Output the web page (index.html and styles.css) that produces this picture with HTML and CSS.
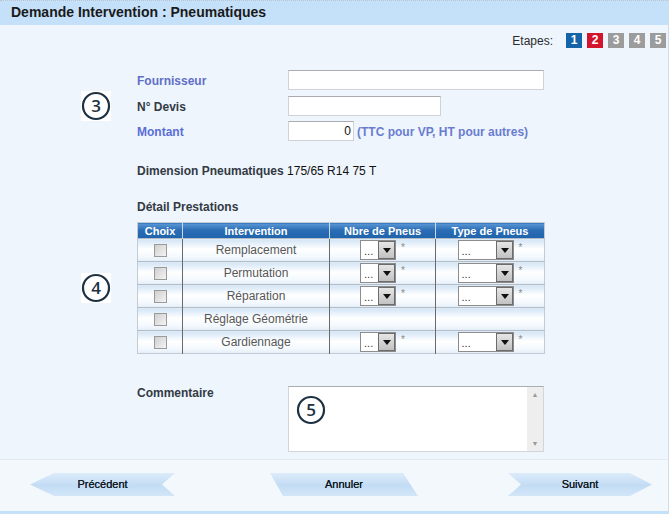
FILE: index.html
```html
<!DOCTYPE html>
<html lang="fr">
<head>
<meta charset="utf-8">
<title>Demande Intervention : Pneumatiques</title>
<link rel="stylesheet" href="styles.css">
</head>
<body>
<div class="page">
  <div class="header">Demande Intervention : Pneumatiques</div>

  <div class="steps">
    <span class="steps-label">Etapes:</span>
    <span class="step step-blue">1</span>
    <span class="step step-red">2</span>
    <span class="step step-gray">3</span>
    <span class="step step-gray">4</span>
    <span class="step step-gray">5</span>
  </div>

  <div class="section sec-fields">
    <div class="marker">
      <svg class="circle-num" width="30" height="30" viewBox="0 0 30 30"><rect width="30" height="30" fill="#fff"/><circle cx="15" cy="15" r="13" fill="none" stroke="#1d3142" stroke-width="2.2"/><text x="15" y="21" text-anchor="middle">3</text></svg>
    </div>
    <div class="fields">
      <label class="lbl lbl-blue">Fournisseur</label>
      <div class="input w-long"></div>
      <label class="lbl">N° Devis</label>
      <div class="input w-mid"></div>
      <label class="lbl lbl-blue2">Montant</label>
      <div class="montant"><div class="input w-short num">0</div><span class="hint">(TTC pour VP, HT pour autres)</span></div>
    </div>
  </div>

  <div class="dimension"><span class="lbl">Dimension Pneumatiques</span> 175/65 R14 75 T</div>

  <div class="section sec-detail">
    <div class="marker marker-4">
      <svg class="circle-num" width="30" height="30" viewBox="0 0 30 30"><rect width="30" height="30" fill="#fff"/><circle cx="15" cy="15" r="13" fill="none" stroke="#1d3142" stroke-width="2.2"/><text x="15" y="21" text-anchor="middle">4</text></svg>
    </div>
    <div class="detail">
      <div class="lbl subtitle">Détail Prestations</div>
      <table class="presta">
        <colgroup><col class="c1"><col class="c2"><col class="c3"><col class="c4"></colgroup>
        <thead>
          <tr><th>Choix</th><th>Intervention</th><th>Nbre de Pneus</th><th>Type de Pneus</th></tr>
        </thead>
        <tbody>
          <tr><td><span class="chk"></span></td><td>Remplacement</td>
            <td><span class="sel sel-s"><span class="sel-val">...</span><span class="sel-btn"></span></span><span class="star">*</span></td>
            <td><span class="sel sel-l"><span class="sel-val">...</span><span class="sel-btn"></span></span><span class="star">*</span></td></tr>
          <tr><td><span class="chk"></span></td><td>Permutation</td>
            <td><span class="sel sel-s"><span class="sel-val">...</span><span class="sel-btn"></span></span><span class="star">*</span></td>
            <td><span class="sel sel-l"><span class="sel-val">...</span><span class="sel-btn"></span></span><span class="star">*</span></td></tr>
          <tr><td><span class="chk"></span></td><td>Réparation</td>
            <td><span class="sel sel-s"><span class="sel-val">...</span><span class="sel-btn"></span></span><span class="star">*</span></td>
            <td><span class="sel sel-l"><span class="sel-val">...</span><span class="sel-btn"></span></span><span class="star">*</span></td></tr>
          <tr><td><span class="chk"></span></td><td>Réglage Géométrie</td><td></td><td></td></tr>
          <tr><td><span class="chk"></span></td><td>Gardiennage</td>
            <td><span class="sel sel-s"><span class="sel-val">...</span><span class="sel-btn"></span></span><span class="star">*</span></td>
            <td><span class="sel sel-l"><span class="sel-val">...</span><span class="sel-btn"></span></span><span class="star">*</span></td></tr>
        </tbody>
      </table>
    </div>
  </div>

  <div class="comment-row">
    <label class="lbl comment-lbl">Commentaire</label>
    <div class="textarea">
      <svg class="circle-num circle-5" width="30" height="30" viewBox="0 0 30 30"><rect width="30" height="30" fill="#fff"/><circle cx="15" cy="15" r="13" fill="none" stroke="#1d3142" stroke-width="2.2"/><text x="15" y="21" text-anchor="middle">5</text></svg>
      <div class="scrollbar"><span class="arr">&#9650;</span><span class="arr">&#9660;</span></div>
    </div>
  </div>

  <div class="footer">
    <div class="buttons">
      <div class="btn btn-prev">Précédent</div>
      <div class="btn btn-cancel">Annuler</div>
      <div class="btn btn-next">Suivant</div>
    </div>
    <div class="footer-strip"></div>
  </div>
</div>
</body>
</html>
```

FILE: styles.css
```css
html, body {
  margin: 0;
  padding: 0;
}
body {
  width: 669px;
  height: 514px;
  overflow: hidden;
  background: #eef5fd;
  font-family: "Liberation Sans", Arial, sans-serif;
  color: #333a44;
}
.page {
  display: flex;
  flex-direction: column;
  height: 514px;
  box-sizing: border-box;
  border-right: 1px solid #d2dbe4;
}
.header {
  height: 25px;
  box-sizing: border-box;
  border-top: 1px dotted #b9c4cf;
  background: #c5e0f9;
  padding-left: 11px;
  font-weight: bold;
  font-size: 14px;
  line-height: 23px;
  color: #1a1a1a;
}
.steps {
  display: flex;
  justify-content: flex-end;
  align-items: center;
  gap: 5px;
  margin-top: 8px;
  padding-right: 2px;
  height: 15px;
}
.steps-label {
  font-size: 12px;
  color: #2b2b2b;
  margin-right: 8px;
}
.step {
  width: 16px;
  height: 15px;
  color: #fff;
  font-size: 12px;
  font-weight: bold;
  text-align: center;
  line-height: 15px;
}
.step-blue { background: #1564a8; }
.step-red { background: #d3142d; }
.step-gray { background: #9c9c9c; }

.section {
  display: flex;
}
.marker {
  width: 137px;
  box-sizing: border-box;
  padding-left: 81px;
  display: flex;
  align-items: center;
}
.circle-num text {
  font-family: "Open Sans", "DejaVu Sans", sans-serif;
  font-size: 17px;
  font-weight: 600;
  fill: #1d3142;
}
.sec-fields {
  margin-top: 22px;
}
.fields {
  display: grid;
  grid-template-columns: 151px auto;
  grid-template-rows: 20px 20px 20px;
  row-gap: 5.5px;
  align-items: center;
}
.fields .lbl {
  padding-top: 2px;
}
.lbl {
  font-size: 12px;
  font-weight: bold;
  color: #333a44;
}
.lbl-blue { color: #5f6fc5; }
.lbl-blue2 { color: #5a6ed6; }
.input {
  height: 20px;
  box-sizing: border-box;
  background: #fff;
  border: 1px solid #cfd3d7;
  border-top-color: #a9adb1;
}
.w-long { width: 256px; }
.w-mid { width: 153px; }
.w-short { width: 66px; }
.num {
  font-size: 12px;
  text-align: right;
  padding-right: 2px;
  line-height: 18px;
  color: #111;
}
.montant {
  display: flex;
  align-items: center;
  gap: 3px;
}
.hint {
  font-size: 12px;
  font-weight: bold;
  color: #6a7cd0;
  padding-top: 2px;
}
.dimension {
  margin-top: 23px;
  padding-left: 137px;
  font-size: 12px;
  line-height: 14px;
  color: #111;
}
.dimension .lbl { color: #333a44; }

.sec-detail {
  margin-top: 22px;
}
.marker-4 {
  align-items: flex-start;
  padding-top: 73px;
}
.subtitle {
  line-height: 14px;
  margin-bottom: 8px;
}
.presta {
  border-collapse: collapse;
  width: 407px;
  font-size: 12px;
  table-layout: fixed;
  border: 1px solid #c3ccd5;
}
.c1 { width: 45px; }
.c2 { width: 147px; }
.c3 { width: 106px; }
.c4 { width: 109px; }
.presta th {
  height: 15px;
  padding: 0;
  background: linear-gradient(#5b97d5, #2a6db5 45%, #1f63ac);
  color: #fff;
  font-size: 11px;
  font-weight: bold;
  line-height: 14px;
  border-left: 1px solid #c7d8ea;
}
.presta th:first-child { border-left: none; }
.presta td {
  height: 22px;
  padding: 0;
  text-align: center;
  color: #575757;
  background: linear-gradient(#d3e5f6, #ffffff 45%, #f3f8fd 80%, #e2edf8);
  border-top: 1px solid #b4bdc6;
  border-left: 1px solid #6a6a6a;
  white-space: nowrap;
  vertical-align: middle;
}
.presta td:first-child { border-left: none; }
.chk {
  display: inline-block;
  width: 11px;
  height: 11px;
  border: 1px solid #9a9a9a;
  background: linear-gradient(135deg, #cfcfcf, #f4f4f4);
  vertical-align: middle;
}
.sel {
  display: inline-flex;
  height: 20px;
  box-sizing: border-box;
  border: 1px solid #8d8d8d;
  background: #fff;
  vertical-align: middle;
}
.sel-s { width: 36px; }
.sel-l { width: 56px; }
.sel-val {
  flex: 1;
  text-align: left;
  padding-left: 3px;
  font-size: 11px;
  line-height: 21px;
  color: #333;
}
.sel-btn {
  width: 17px;
  border: 1px solid #6c6c6c;
  box-sizing: border-box;
  background: linear-gradient(#e6e6e6, #c2c2c2);
  position: relative;
}
.sel-btn::after {
  content: "";
  position: absolute;
  left: 4px;
  top: 6px;
  border-left: 4px solid transparent;
  border-right: 4px solid transparent;
  border-top: 5px solid #111;
}
.star {
  display: inline-block;
  vertical-align: top;
  margin-left: 5px;
  font-size: 10px;
  color: #8a8a8a;
  line-height: 16px;
}

.comment-row {
  display: flex;
  margin-top: 32px;
  padding-left: 137px;
}
.comment-lbl {
  width: 151px;
  line-height: 14px;
}
.textarea {
  position: relative;
  width: 256px;
  height: 66px;
  box-sizing: border-box;
  background: #fff;
  border: 1px solid #d2d6da;
  border-top-color: #a9adb1;
  display: flex;
  justify-content: flex-end;
}
.circle-5 {
  position: absolute;
  left: 7px;
  top: 8px;
}
.scrollbar {
  width: 16px;
  background: #eeeeee;
  display: flex;
  flex-direction: column;
  justify-content: space-between;
  align-items: center;
  padding: 4px 0 3px;
  box-sizing: border-box;
}
.arr {
  font-size: 7px;
  color: #9a9a9a;
  line-height: 8px;
}

.footer {
  margin-top: 7px;
  flex: 1;
  display: flex;
  flex-direction: column;
  background: #f3f8fd;
  border-top: 1px solid #e2eaf2;
}
.buttons {
  flex: 1;
  display: flex;
  align-items: flex-start;
  padding-top: 13px;
}
.btn {
  height: 23px;
  font-size: 11px;
  line-height: 23px;
  color: #111a24;
  text-shadow: 0 0 0.4px #111a24;
  text-align: center;
  background: linear-gradient(#dcebfa, #c3dcf4 55%, #d3e6f8);
}
.btn-prev {
  margin-left: 30px;
  width: 145px;
  clip-path: polygon(0 50%, 24px 0, 100% 0, calc(100% - 13px) 50%, 100% 100%, 24px 100%);
}
.btn-cancel {
  margin-left: 95px;
  width: 148px;
  clip-path: polygon(0 0, calc(100% - 15px) 0, 100% 100%, 13px 100%);
}
.btn-next {
  margin-left: 90px;
  width: 144px;
  clip-path: polygon(0 0, calc(100% - 22px) 0, 100% 50%, calc(100% - 22px) 100%, 0 100%, 13px 50%);
}
.footer-strip {
  height: 3px;
  background: #c5e0f9;
}
```
